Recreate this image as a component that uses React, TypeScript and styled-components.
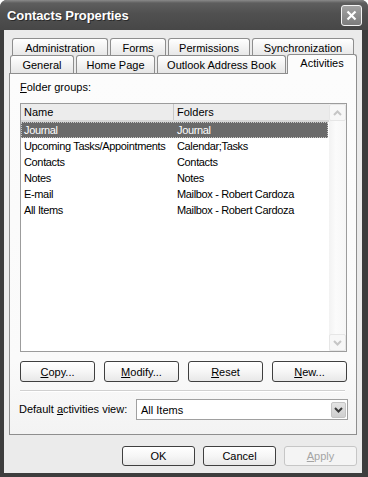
import React from 'react';
import styled, {createGlobalStyle} from 'styled-components';

const GlobalStyle = createGlobalStyle`
  html, body {
    margin: 0;
    padding: 0;
    background: #ffffff;
  }
  body {
    font-family: "Liberation Sans", Arial, sans-serif;
    font-size: 11px;
    color: #000;
  }
`;

const Window = styled.div`
  width: 368px;
  height: 477px;
  display: flex;
  flex-direction: column;
  background: #3d3d3d;
  border-radius: 7px 7px 0 0;
  overflow: hidden;
`;

const TitleBar = styled.div`
  height: 30px;
  flex: none;
  display: flex;
  align-items: center;
  justify-content: space-between;
  padding: 0 6px 0 7px;
  background: linear-gradient(#8a8a8a 0, #5e5e5e 10%, #505050 45%, #474747 100%);
`;

const Title = styled.span`
  color: #fff;
  font-weight: bold;
  font-size: 13px;
  letter-spacing: -0.1px;
  text-shadow: 1px 1px 0 #2a2a2a;
`;

const CloseButton = styled.div`
  width: 21px;
  height: 21px;
  box-sizing: border-box;
  border: 1px solid #f4f4f4;
  border-radius: 3px;
  background: linear-gradient(#a2a2a2, #7c7c7c);
  display: flex;
  align-items: center;
  justify-content: center;
`;

const Body = styled.div`
  flex: 1;
  margin: 0 6px 4px 4px;
  background: #ebebeb;
  padding: 8px 5px 7px 5px;
  display: flex;
  flex-direction: column;
`;

const TabRow = styled.div<{$indent: number}>`
  display: flex;
  align-items: flex-end;
  gap: 2px;
  height: ${p => (p.$indent === 3 ? 18 : 17)}px;
  padding-left: ${p => p.$indent}px;
`;

const Tab = styled.div<{$w: number; $active?: boolean}>`
  width: ${p => p.$w}px;
  height: ${p => (p.$active ? 20 : 18)}px;
  box-sizing: border-box;
  border: 1px solid #8e8e8e;
  border-bottom: none;
  border-radius: 3px 3px 0 0;
  background: ${p => (p.$active ? '#fcfcfc' : 'linear-gradient(#ffffff, #f0f0f0 60%, #e6e6e6)')};
  display: flex;
  align-items: center;
  justify-content: center;
  padding-bottom: ${p => (p.$active ? 3 : 0)}px;
  margin-left: ${p => (p.$active ? -1 : 0)}px;
  margin-bottom: ${p => (p.$active ? -1 : 0)}px;
  position: ${p => (p.$active ? 'relative' : 'static')};
  z-index: ${p => (p.$active ? 1 : 'auto')};
  white-space: nowrap;
`;

const Panel = styled.div`
  height: 362px;
  box-sizing: border-box;
  border: 1px solid #8e8e8e;
  background: linear-gradient(#fcfcfc, #fafafa 80%, #f3f3f3);
  padding: 7px 9px 0 10px;
  display: flex;
  flex-direction: column;
`;

const Label = styled.div`
  line-height: 13px;
  white-space: nowrap;
`;

const ListView = styled.div`
  margin-top: 9px;
  height: 249px;
  box-sizing: border-box;
  border: 1px solid #9c9c9c;
  background: #fff;
  display: flex;
`;

const ListBody = styled.div`
  flex: 1;
  display: flex;
  flex-direction: column;
`;

const HeaderRow = styled.div`
  height: 18px;
  box-sizing: border-box;
  display: flex;
  background: #ececec;
  border-bottom: 2px solid #d6d6d6;
`;

const HeaderCell = styled.div<{$w?: number}>`
  width: ${p => (p.$w ? `${p.$w}px` : 'auto')};
  flex: ${p => (p.$w ? 'none' : 1)};
  box-sizing: border-box;
  padding-left: 3px;
  display: flex;
  align-items: center;
  border-right: ${p => (p.$w ? '1px solid #c8c8c8' : 'none')};
`;

const Row = styled.div<{$selected?: boolean}>`
  height: 16px;
  box-sizing: border-box;
  display: flex;
  align-items: center;
  background: ${p => (p.$selected ? '#6a6a6a' : 'transparent')};
  color: ${p => (p.$selected ? '#fff' : '#000')};
  outline: ${p => (p.$selected ? '1px dotted #c8c8c8' : 'none')};
  outline-offset: -1px;
  margin-right: 1px;
`;

const Cell = styled.div<{$w?: number}>`
  width: ${p => (p.$w ? `${p.$w}px` : 'auto')};
  flex: ${p => (p.$w ? 'none' : 1)};
  padding-left: 3px;
  box-sizing: border-box;
  white-space: nowrap;
  overflow: hidden;
  letter-spacing: -0.35px;
`;

const ScrollBar = styled.div`
  width: 17px;
  flex: none;
  display: flex;
  flex-direction: column;
  justify-content: space-between;
  background: linear-gradient(90deg, #f2f2f2, #fbfbfb 40%, #f6f6f6);
`;

const ScrollButton = styled.div`
  height: 17px;
  box-sizing: border-box;
  border: 1px solid #e6e6e6;
  border-radius: 2px;
  background: #f7f7f7;
  display: flex;
  align-items: center;
  justify-content: center;
`;

const ButtonRow = styled.div<{$top: number}>`
  display: flex;
  gap: ${p => (p.$top === 9 ? 9 : 8)}px;
  margin-top: ${p => p.$top}px;
  justify-content: ${p => (p.$top === 9 ? 'flex-start' : 'flex-end')};
`;

const Button = styled.div<{$w: number; $h: number; $disabled?: boolean}>`
  width: ${p => p.$w}px;
  height: ${p => p.$h}px;
  box-sizing: border-box;
  border: 1px solid ${p => (p.$disabled ? '#c6c6c6' : '#3f3f3f')};
  border-radius: 3px;
  background: ${p => (p.$disabled ? '#f4f4f4' : 'linear-gradient(#ffffff, #f6f6f6 50%, #e8e8e8)')};
  color: ${p => (p.$disabled ? '#a4a4a4' : '#000')};
  display: flex;
  align-items: center;
  justify-content: center;
  white-space: nowrap;
`;

const Separator = styled.div`
  margin-top: 8px;
  height: 1px;
  background: #d0d0d0;
  border-bottom: 1px solid #ffffff;
  margin-right: 2px;
`;

const ComboRow = styled.div`
  display: flex;
  align-items: center;
  margin-top: 7px;
  margin-left: -1px;
`;

const Combo = styled.div`
  margin-left: auto;
  margin-right: -1px;
  width: 212px;
  height: 21px;
  box-sizing: border-box;
  border: 1px solid #a0a0a0;
  background: #fff;
  display: flex;
  align-items: center;
  padding: 1px;
`;

const ComboText = styled.span`
  flex: 1;
  padding-left: 3px;
`;

const ComboButton = styled.div`
  width: 15px;
  height: 16px;
  box-sizing: border-box;
  border: 1px solid #c4c4c4;
  border-radius: 2px;
  background: linear-gradient(#e4e4e4, #cfcfcf);
  display: flex;
  align-items: center;
  justify-content: center;
`;

const Chevron = ({up, color}: {up?: boolean; color: string}) => (
  <svg width="9" height="6" viewBox="0 0 9 6">
    <path d={up ? 'M1 5 L4.5 1.5 L8 5' : 'M1 1 L4.5 4.5 L8 1'} fill="none" stroke={color} strokeWidth="2"/>
  </svg>
);

const rows = [
  ['Journal', 'Journal'],
  ['Upcoming Tasks/Appointments', 'Calendar;Tasks'],
  ['Contacts', 'Contacts'],
  ['Notes', 'Notes'],
  ['E-mail', 'Mailbox - Robert Cardoza'],
  ['All Items', 'Mailbox - Robert Cardoza'],
];

function App() {
  return (
    <Window>
      <GlobalStyle/>
      <TitleBar>
        <Title>Contacts Properties</Title>
        <CloseButton>
          <svg width="11" height="11" viewBox="0 0 11 11">
            <path d="M1.5 1.5 L9.5 9.5 M9.5 1.5 L1.5 9.5" stroke="#fff" strokeWidth="2.2"/>
          </svg>
        </CloseButton>
      </TitleBar>
      <Body>
        <TabRow $indent={3}>
          <Tab $w={96}>Administration</Tab>
          <Tab $w={56}>Forms</Tab>
          <Tab $w={82}>Permissions</Tab>
          <Tab $w={102}>Synchronization</Tab>
        </TabRow>
        <TabRow $indent={1}>
          <Tab $w={64}>General</Tab>
          <Tab $w={79}>Home Page</Tab>
          <Tab $w={129}>Outlook Address Book</Tab>
          <Tab $w={70} $active>Activities</Tab>
        </TabRow>
        <Panel>
          <Label><u>F</u>older groups:</Label>
          <ListView>
            <ListBody>
              <HeaderRow>
                <HeaderCell $w={153}>Name</HeaderCell>
                <HeaderCell>Folders</HeaderCell>
              </HeaderRow>
              {rows.map(([name, folder], i) => (
                <Row key={name} $selected={i === 0}>
                  <Cell $w={153}>{name}</Cell>
                  <Cell>{folder}</Cell>
                </Row>
              ))}
            </ListBody>
            <ScrollBar>
              <ScrollButton><Chevron up color="#c6c6c6"/></ScrollButton>
              <ScrollButton><Chevron color="#c6c6c6"/></ScrollButton>
            </ScrollBar>
          </ListView>
          <ButtonRow $top={9}>
            <Button $w={75} $h={21}><u>C</u>opy...</Button>
            <Button $w={75} $h={21}><u>M</u>odify...</Button>
            <Button $w={75} $h={21}><u>R</u>eset</Button>
            <Button $w={75} $h={21}><u>N</u>ew...</Button>
          </ButtonRow>
          <Separator/>
          <ComboRow>
            <Label>Default <u>a</u>ctivities view:</Label>
            <Combo>
              <ComboText>All Items</ComboText>
              <ComboButton><Chevron color="#3a3a3a"/></ComboButton>
            </Combo>
          </ComboRow>
        </Panel>
        <ButtonRow $top={11}>
          <Button $w={73} $h={20}>OK</Button>
          <Button $w={73} $h={20}>Cancel</Button>
          <Button $w={73} $h={20} $disabled><u>A</u>pply</Button>
        </ButtonRow>
      </Body>
    </Window>
  );
}

export default App;
